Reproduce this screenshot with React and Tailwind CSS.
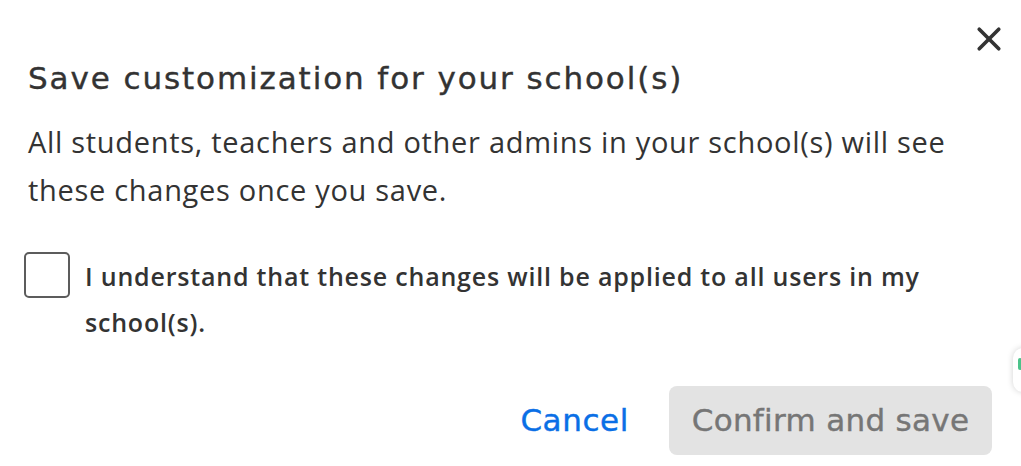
import React, { useState } from "react";

const headFont = { fontFamily: "'DejaVu Sans', Inter, sans-serif" };

export default function App() {
  const [checked, setChecked] = useState(false);

  return (
    <div className="relative h-[466px] w-[1021px] overflow-hidden bg-white text-[#333333]">
      {/* close */}
      <button
        type="button"
        aria-label="Close"
        className="absolute right-[14px] top-[21px] flex h-[36px] w-[36px] items-center justify-center text-[#333333]"
      >
        <svg width="26" height="26" viewBox="0 0 24 24" fill="none" stroke="currentColor" strokeWidth="3.4" strokeLinecap="round">
          <line x1="3" y1="3" x2="21" y2="21" />
          <line x1="21" y1="3" x2="3" y2="21" />
        </svg>
      </button>

      <div className="flex flex-col px-[28px] pt-[56px]">
        <h2
          className="text-[31px] font-normal leading-[44px] tracking-[1.9px] text-[#333333] [-webkit-text-stroke:0.4px_#333333]"
          style={headFont}
        >
          Save customization for your school(s)
        </h2>

        <p className="mt-[18px] font-['Open_Sans',sans-serif] text-[29px] leading-[48px] tracking-[0.7px] text-[#333333]">
          All students, teachers and other admins in your school(s) will see
          <br />
          these changes once you save.
        </p>

        <label className="mt-[39px] flex cursor-pointer items-start gap-[15px]">
          <input
            type="checkbox"
            className="peer sr-only"
            checked={checked}
            onChange={(e) => setChecked(e.target.checked)}
          />
          <span className="-ml-[4px] mt-[-1px] h-[46px] w-[46px] shrink-0 rounded-[5px] border-2 border-[#5c5c5c] bg-white" />
          <span className="font-['Open_Sans',sans-serif] text-[25px] font-semibold leading-[46px] tracking-[0.8px] text-[#333333]">
            I understand that these changes will be applied to all users in my
            <br />
            school(s).
          </span>
        </label>

        <div className="mt-[41px] flex items-center justify-end gap-[40px] pr-[1px]">
          <button
            type="button"
            className="text-[31px] tracking-[0.6px] text-[#0a6fe6] [-webkit-text-stroke:0.4px_#0a6fe6]"
            style={headFont}
          >
            Cancel
          </button>
          <button
            type="button"
            disabled
            className="flex h-[69px] w-[323px] items-center justify-center rounded-[8px] bg-[#e3e3e3] text-[31px] tracking-[0.3px] text-[#767676] [-webkit-text-stroke:0.4px_#767676]"
            style={headFont}
          >
            Confirm and save
          </button>
        </div>
      </div>

      {/* partial floating widget at right edge */}
      <div className="absolute right-[-30px] top-[348px] h-[44px] w-[38px] rounded-[10px] bg-white shadow-[0_0_6px_rgba(0,0,0,0.18)]">
        <div className="ml-[5px] mt-[10px] h-[12px] w-[4px] rounded-full bg-[#4cc38a]" />
      </div>
    </div>
  );
}
